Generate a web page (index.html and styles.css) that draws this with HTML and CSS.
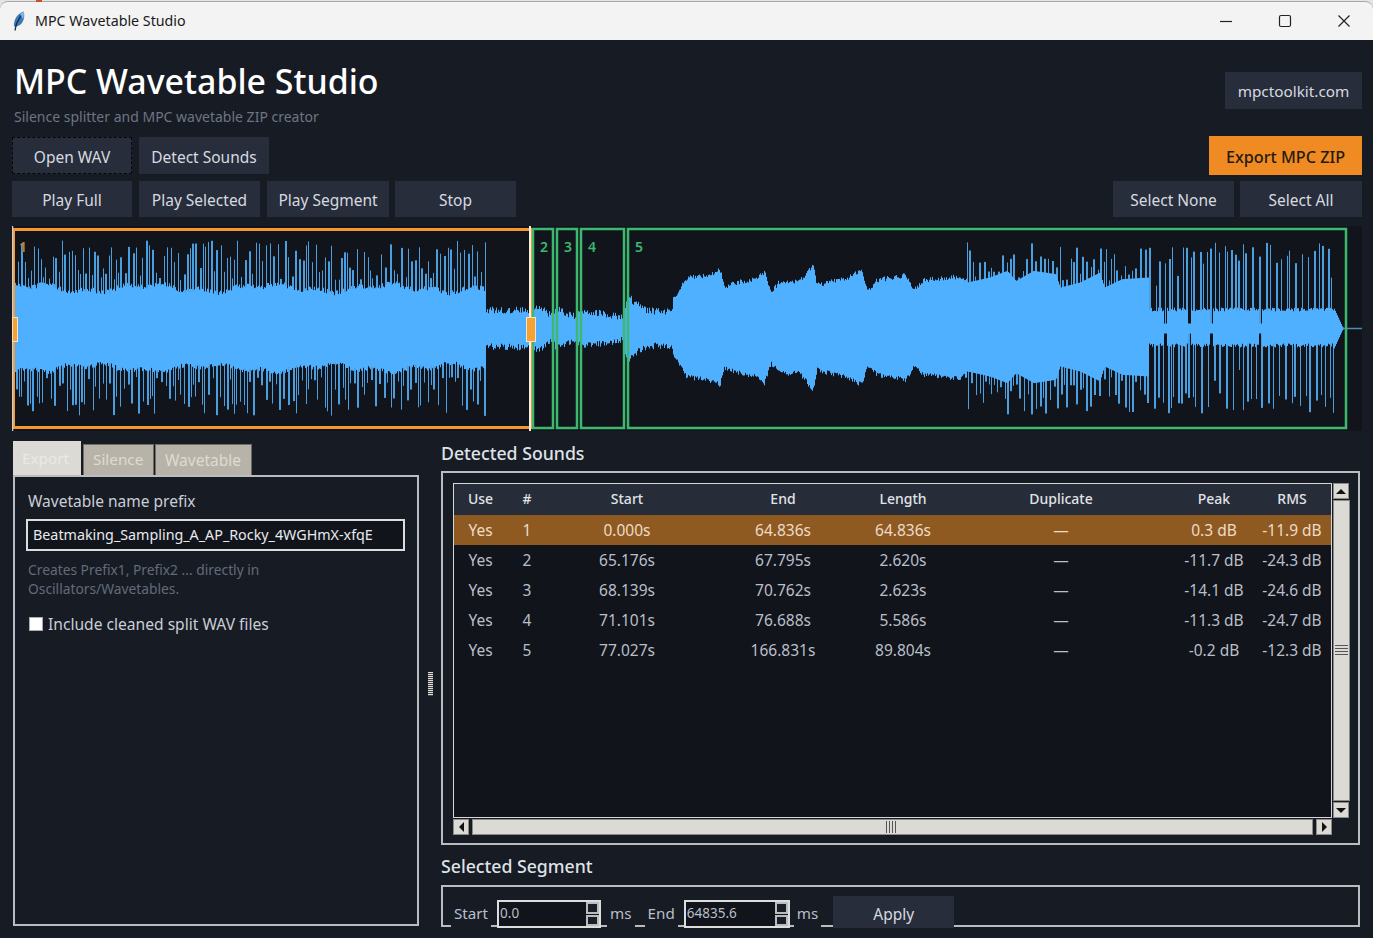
FILE: index.html
```html
<!DOCTYPE html>
<html lang="en">
<head>
<meta charset="utf-8">
<title>MPC Wavetable Studio</title>
<link rel="stylesheet" href="styles.css">
</head>
<body>
<div class="window">
  <header class="titlebar">
    <svg class="feather" viewBox="0 0 14 20" width="14" height="20"><path d="M2 15.500C1.500 10 4 3.500 11.500.5c1.800 4.500.3 10.500-3.500 13.500L4.500 15.500z" fill="#3a78bb"/><path d="M8 3C9.500 2 10.500 1.300 11.500.5c.8 2.500.5 5-.5 7.500z" fill="#86b7e6"/><path d="M3 19.500 4.500 12.500 9 4.500" fill="none" stroke="#14283f" stroke-width="1.200"/></svg>
    <span class="titlebar-text">MPC Wavetable Studio</span>
    <div class="controls">
      <svg width="14" height="14" viewBox="0 0 14 14"><path d="M1 7.500h12" stroke="#222" stroke-width="1.200"/></svg>
      <svg width="14" height="14" viewBox="0 0 14 14"><rect x="1.500" y="1.500" width="11" height="11" rx="1.500" fill="none" stroke="#222" stroke-width="1.200"/></svg>
      <svg width="14" height="14" viewBox="0 0 14 14"><path d="M1.500 1.500l11 11M12.500 1.500l-11 11" stroke="#222" stroke-width="1.200"/></svg>
    </div>
  </header>

  <main class="app">
    <div class="head">
      <div>
        <h1 class="title">MPC Wavetable Studio</h1>
        <p class="subtitle">Silence splitter and MPC wavetable ZIP creator</p>
      </div>
      <button class="btn link-btn">mpctoolkit.com</button>
    </div>

    <div class="toolbar toolbar-one">
      <div class="btn-group">
        <button class="btn w120 focused">Open WAV</button>
        <button class="btn w130">Detect Sounds</button>
      </div>
      <button class="btn export">Export MPC ZIP</button>
    </div>

    <div class="toolbar toolbar-two">
      <div class="btn-group play-group">
        <button class="btn w120">Play Full</button>
        <button class="btn w121">Play Selected</button>
        <button class="btn w122">Play Segment</button>
        <button class="btn w121 stop">Stop</button>
      </div>
      <div class="btn-group">
        <button class="btn w121">Select None</button>
        <button class="btn w122">Select All</button>
      </div>
    </div>

    <div class="wave-box">
      <svg class="wave" viewBox="0 0 1350 205" width="1350" height="205">
        <path id="wave-thin" class="wave-thin" d=""/>
        <path id="wave-core" class="wave-core" d=""/>
        <path class="tail" d="M1331 102.500h19"/>
        <g class="seg">
          <rect x="521" y="3" width="20" height="199"/>
          <rect x="545" y="3" width="20" height="199"/>
          <rect x="569" y="3" width="43" height="199"/>
          <rect x="616" y="3" width="718" height="199"/>
        </g>
        <rect class="sel" x="1.500" y="3.500" width="517" height="198"/>
        <path class="cursor" d="M0.500 0v205"/>
        <path class="cursor cursor-r" d="M518 0v205"/>
        <rect class="handle" x="0.500" y="91.500" width="5" height="24"/>
        <rect class="handle" x="514.500" y="91.500" width="9" height="24"/>
        <text class="lbl lbl-o" x="7" y="26">1</text>
        <text class="lbl" x="528" y="26">2</text>
        <text class="lbl" x="552" y="26">3</text>
        <text class="lbl" x="576" y="26">4</text>
        <text class="lbl" x="623" y="26">5</text>
      </svg>
    </div>

    <div class="split">
      <section class="left">
        <div class="tabs">
          <div class="tab active">Export</div>
          <div class="tab">Silence</div>
          <div class="tab">Wavetable</div>
        </div>
        <div class="tab-panel">
          <div class="field-label">Wavetable name prefix</div>
          <div class="text-input">Beatmaking_Sampling_A_AP_Rocky_4WGHmX-xfqE</div>
          <p class="hint">Creates Prefix1, Prefix2 ... directly in<br>Oscillators/Wavetables.</p>
          <label class="check"><span class="box"></span>Include cleaned split WAV files</label>
        </div>
      </section>

      <div class="sash"><span class="grip"></span></div>

      <section class="right">
        <h2 class="heading">Detected Sounds</h2>
        <div class="frame list-frame">
          <div class="tree-grid">
            <div class="tree">
              <table class="sounds">
                <colgroup>
                  <col class="c-use"><col class="c-num"><col class="c-start"><col class="c-end"><col class="c-len"><col class="c-dup"><col class="c-peak"><col class="c-rms">
                </colgroup>
                <thead>
                  <tr><th>Use</th><th>#</th><th>Start</th><th>End</th><th>Length</th><th>Duplicate</th><th>Peak</th><th>RMS</th></tr>
                </thead>
                <tbody>
                  <tr class="picked"><td>Yes</td><td>1</td><td>0.000s</td><td>64.836s</td><td>64.836s</td><td>—</td><td>0.3 dB</td><td>-11.9 dB</td></tr>
                  <tr><td>Yes</td><td>2</td><td>65.176s</td><td>67.795s</td><td>2.620s</td><td>—</td><td>-11.7 dB</td><td>-24.3 dB</td></tr>
                  <tr><td>Yes</td><td>3</td><td>68.139s</td><td>70.762s</td><td>2.623s</td><td>—</td><td>-14.1 dB</td><td>-24.6 dB</td></tr>
                  <tr><td>Yes</td><td>4</td><td>71.101s</td><td>76.688s</td><td>5.586s</td><td>—</td><td>-11.3 dB</td><td>-24.7 dB</td></tr>
                  <tr><td>Yes</td><td>5</td><td>77.027s</td><td>166.831s</td><td>89.804s</td><td>—</td><td>-0.2 dB</td><td>-12.3 dB</td></tr>
                </tbody>
              </table>
            </div>
            <div class="vscroll">
              <div class="sb-btn"><span class="arr up"></span></div>
              <div class="sb-thumb"><span class="grip-h"></span></div>
              <div class="sb-btn"><span class="arr down"></span></div>
            </div>
            <div class="hscroll">
              <div class="sb-btn"><span class="arr left-arr"></span></div>
              <div class="sb-thumb-h"><span class="grip-v"></span></div>
              <div class="sb-btn"><span class="arr right-arr"></span></div>
            </div>
          </div>
        </div>

        <h2 class="heading heading-seg">Selected Segment</h2>
        <div class="frame seg-frame">
          <div class="seg-row">
            <span class="seg-text s-start">Start</span>
            <div class="spin s-w104"><span class="spin-val">0.0</span><span class="spin-btns"><i></i><i></i></span></div>
            <span class="seg-text s-ms">ms</span>
            <span class="seg-text s-end">End</span>
            <div class="spin s-w106"><span class="spin-val">64835.6</span><span class="spin-btns"><i></i><i></i></span></div>
            <span class="seg-text s-ms2">ms</span>
            <button class="btn apply">Apply</button>
          </div>
        </div>
      </section>
    </div>
  </main>
</div>
<script src="script.js"></script>
</body>
</html>
```

FILE: styles.css
```css
* { box-sizing: border-box; }
html, body { margin: 0; padding: 0; }
body {
  width: 1373px;
  height: 938px;
  overflow: hidden;
  background: #e4e4e4;
  font-family: "Noto Sans", "Open Sans", sans-serif;
  color: #d6dae0;
}
.window { height: 938px; display: flex; flex-direction: column; position: relative; }
.window::before {
  content: "";
  position: absolute;
  left: 36px;
  top: 0;
  width: 6px;
  height: 2px;
  background: #c8502a;
}
.titlebar {
  height: 39px;
  margin-top: 1px;
  flex: none;
  display: flex;
  align-items: center;
  background: #f3f3f3;
  border-top: 1px solid #a9a9a9;
  border-radius: 8px 8px 0 0;
  padding-left: 12px;
  color: #1a1a1a;
}
.feather { flex: none; }
.titlebar-text { margin: -2px 0 0 9px; font-size: 14.250px; flex: 1; }
.controls { display: flex; gap: 45px; margin-right: 22px; }
.app {
  flex: 1;
  background: #171b24;
  padding: 0 11px 0 12px;
  display: flex;
  flex-direction: column;
  min-height: 0;
}
.head { height: 97px; display: flex; justify-content: space-between; flex: none; }
.title {
  margin: 20px 0 0 2px;
  font-size: 33.900px;
  line-height: 42px;
  font-weight: 500;
  color: #fff;
  letter-spacing: 0;
}
.subtitle {
  margin: 5px 0 0 2px;
  font-size: 14px;
  line-height: 20px;
  color: #6d7583;
}
.btn {
  display: block;
  height: 36px;
  padding: 1px 0 0;
  border: 0;
  background: #272d3a;
  color: #d6dae0;
  font: inherit;
  font-size: 15.500px;
  text-align: center;
}
.link-btn { width: 137px; height: 37px; margin-top: 32px; font-size: 15.300px; }
.toolbar { display: flex; justify-content: space-between; align-items: center; flex: none; }
.toolbar-one { height: 37px; }
.toolbar-one .btn { padding-top: 2px; }
.toolbar-two { height: 36px; margin-top: 7px; }
.btn-group { display: flex; gap: 6px; }
.toolbar-one .btn-group, .play-group { gap: 7px; }
.stop { margin-left: -1px; }
.w120 { width: 120px; }
.w121 { width: 121px; }
.w122 { width: 122px; }
.w130 { width: 130px; height: 37px; }
.focused { outline: 1px dashed #05070a; outline-offset: -1px; height: 37px; }
.export {
  width: 153px;
  height: 39px;
  background: #f08a22;
  color: #241a10;
  font-size: 16.200px;
  font-weight: 500;
}
.wave-box { flex: none; height: 205px; margin-top: 9px; background: #11141b; }
.wave { display: block; }
.wave-thin { stroke: #4a9fe0; stroke-width: 1; fill: none; }
.wave-core { stroke: #4fb0ff; stroke-width: 1; fill: none; }
.tail { stroke: #4a8cbd; stroke-width: 1.500; fill: none; }
.seg rect { fill: none; stroke: #3cb86f; stroke-width: 2.500; }
.sel { fill: none; stroke: #f4982f; stroke-width: 3; }
.cursor { stroke: #cfcfcf; stroke-width: 1.500; }
.cursor-r { stroke: #eef2ea; stroke-width: 2; }
.handle { fill: #f4a235; stroke: #f6e3c7; stroke-width: 1; }
.lbl { fill: #3cb86f; font-size: 14px; font-weight: 600; }
.lbl-o { fill: #c07f30; }

.split { flex: 1; display: flex; margin-top: 10px; min-height: 0; }
.left { width: 406px; margin-left: 1px; flex: none; display: flex; flex-direction: column; }
.tabs { display: flex; align-items: flex-end; height: 34px; gap: 2px; flex: none; }
.tab {
  height: 31px;
  padding: 4px 9px 0;
  background: #b7b3a8;
  color: #dedbd3;
  font-size: 15.300px;
  border: 1px solid #6d6d68;
  border-bottom: 0;
}
.tab:nth-child(2) { width: 71px; }
.tab:nth-child(3) { width: 97px; margin-left: -1px; font-size: 15.500px; }
.tab.active {
  height: 34px;
  width: 68px;
  padding-top: 7px;
  background: #dcdad5;
  color: #ebe9e4;
  border: 0;
}
.tab-panel {
  height: 451px;
  border: 2px solid #b9bdc0;
  padding: 13px 12px 0 13px;
}
.field-label { font-size: 15.500px; line-height: 22px; color: #c9ced6; }
.text-input {
  width: 379px;
  height: 32px;
  margin: 7px 0 0 -2px;
  padding: 0 5px;
  border: 2px solid #dcdedd;
  background: #11141b;
  color: #e8eaee;
  font-size: 14.300px;
  line-height: 28px;
  white-space: nowrap;
}
.hint { margin: 9px 0 0; font-size: 13.800px; line-height: 19px; color: #626b79; }
.check { display: flex; align-items: center; margin-top: 16px; font-size: 15.600px; line-height: 20px; color: #c9ced6; }
.box { width: 14px; height: 14px; margin: 0 5px 0 1px; background: #fff; border: 1px solid #aaa; flex: none; }

.sash { width: 22px; flex: none; position: relative; }
.grip {
  position: absolute;
  left: 9px;
  top: 231px;
  width: 5px;
  height: 24px;
  background: repeating-linear-gradient(#dfe0de 0 1px, #444 1px 2px);
}
.right { flex: 1; display: flex; flex-direction: column; min-width: 0; }
.heading { margin: 0; font-size: 17.700px; line-height: 24px; font-weight: 500; color: #dfe2e6; height: 30px; flex: none; }
.frame { border: 2px solid #b9bdc0; }
.list-frame { width: 919px; height: 374px; padding: 10px 8px 0 10px; flex: none; }
.tree-grid { display: grid; grid-template-columns: 879px 18px; grid-template-rows: 335px 17px; }
.tree { border: 1px solid #d4d6d7; background: #11141b; overflow: hidden; }
.sounds { width: 877px; table-layout: fixed; border-collapse: collapse; font-size: 15.500px; }
.c-use { width: 53px; }
.c-num { width: 40px; }
.c-start { width: 160px; }
.c-end { width: 152px; }
.c-len { width: 88px; }
.c-dup { width: 228px; }
.c-peak { width: 78px; }
.c-rms { width: 78px; }
.sounds th {
  height: 31px;
  padding: 0 0 3px;
  background: #262c38;
  color: #e0e3e7;
  font-weight: 500;
  font-size: 14px;
}
.sounds td { height: 30px; padding: 0 0 1px; text-align: center; color: #b9bfc8; }
.picked td { background: #8f5a22; color: #ecdcc6; }
.vscroll { display: flex; flex-direction: column; gap: 1px; padding-left: 1px; }
.hscroll { display: flex; gap: 3px; margin-top: 1px; }
.sb-btn {
  width: 16px;
  height: 16px;
  flex: none;
  background: #dcdad5;
  border: 1px solid #8a8a86;
  display: flex;
  align-items: center;
  justify-content: center;
}
.sb-thumb {
  flex: 1;
  background: #dcdad5;
  border: 1px solid #8a8a86;
  display: flex;
  align-items: center;
  justify-content: center;
}
.sb-thumb-h {
  flex: 1;
  background: #dcdad5;
  border: 1px solid #8a8a86;
  display: flex;
  align-items: center;
  padding-left: 413px;
}
.grip-h { width: 13px; height: 12px; background: repeating-linear-gradient(#555 0 1px, #dcdad5 1px 3px); }
.grip-v { width: 12px; height: 12px; background: repeating-linear-gradient(90deg, #555 0 1px, #dcdad5 1px 3px); }
.arr { width: 0; height: 0; display: block; border-style: solid; border-color: transparent; }
.up { border-width: 0 5px 5px; border-bottom-color: #111; }
.down { border-width: 5px 5px 0; border-top-color: #111; }
.left-arr { border-width: 5px 5px 5px 0; border-right-color: #111; }
.right-arr { border-width: 5px 0 5px 5px; border-left-color: #111; }
.heading-seg { margin-top: 8px; height: 32px; line-height: 26px; }
.seg-frame { width: 919px; height: 42px; padding-left: 8px; position: relative; }
.seg-row { display: flex; align-items: flex-end; height: 40px; margin-bottom: -2px; position: relative; top: 1px; }
.seg-text { height: 26px; line-height: 23px; font-size: 15.200px; color: #b9bfc8; background: #171b24; padding: 0 3px; flex: none; }
.s-ms { margin-left: 6px; }
.s-end { margin-left: 10px; }
.s-ms2 { margin-left: 4px; }
.spin {
  height: 28px;
  margin-left: 6px;
  border: 2px solid #dcdedd;
  background: #11141b;
  display: flex;
  justify-content: space-between;
  flex: none;
}
.s-w104 { width: 104px; }
.s-w106 { width: 106px; }
.spin-val { font-size: 13.500px; line-height: 22px; padding-left: 1px; color: #b9bfc8; }
.spin-btns { display: flex; flex-direction: column; width: 13px; gap: 1px; }
.spin-btns i { flex: 1; border: 2px solid #b9bdc0; background: #1a1e27; }
.apply { width: 121px; height: 32px; margin-left: 12px; padding-top: 4px; flex: none; }
```

FILE: script.js
```javascript
(function () {
  var seed = 20240611;
  function rnd() {
    seed |= 0; seed = (seed + 0x6d2b79f5) | 0;
    var t = Math.imul(seed ^ (seed >>> 15), 1 | seed);
    t = (t + Math.imul(t ^ (t >>> 7), 61 | t)) ^ t;
    return ((t ^ (t >>> 14)) >>> 0) / 4294967296;
  }
  function interp(pts, x) {
    for (var i = 1; i < pts.length; i++) {
      if (x <= pts[i][0]) {
        var a = pts[i - 1], b = pts[i];
        return a[1] + (b[1] - a[1]) * (x - a[0]) / (b[0] - a[0]);
      }
    }
    return pts[pts.length - 1][1];
  }
  function fromZoom(list) {
    return list.map(function (p) { return [680 + p[0] / 2.263, 103 - p[1] / 3]; });
  }
  var coreD = fromZoom([[0,190],[15,158],[60,152],[90,135],[100,185],[130,172],[175,160],[190,140],[205,200],[225,170],[270,170],[300,120],[310,180],[385,155],[410,135],[425,195],[445,165],[495,155],[510,150],[530,195],[550,165],[630,155],[650,165],[700,150],[740,130],[760,160],[800,130],[850,140],[860,180],[905,165],[950,135],[960,180],[1000,155],[1060,150]]);
  var coreB = [[485,15],[530,15],[540,18],[552,8],[556,16],[576,8],[580,15],[622,8],[628,30],[634,22],[648,14],[672,14]];
  var dips = [1165, 1189, 1211, 1260];

  function makeSide() {
    return { left: 0, high: false, h: 0 };
  }
  function step(side, gapMax, lowSpike, highSpike, tallChance, spikeLen) {
    if (side.left <= 0) {
      side.high = !side.high;
      if (side.high) {
        side.left = 1 + Math.floor(rnd() * spikeLen);
        side.h = rnd() < tallChance ? highSpike - rnd() * 22 : lowSpike + rnd() * 14;
      } else {
        side.left = 1 + Math.floor(rnd() * gapMax);
        side.h = 0;
      }
    }
    side.left--;
    return side.h;
  }
  var top = makeSide(), bot = makeSide();
  var core = '', thin = '', cx = 102.5;

  for (var px = 14; px <= 1343; px++) {
    var up, dn, su = 0, sd = 0;
    if (px <= 485) {
      var wob = 3 * Math.sin(px / 19) + 2 * Math.sin(px / 6.1);
      up = 38 + wob + rnd() * 5;
      dn = 37 + wob + rnd() * 5;
      su = step(top, 3, 48, 88, 0.6, 1.6);
      sd = step(bot, 3, 48, 88, 0.6, 1.6);
    } else if (px < 673) {
      var e = interp(coreB, px);
      up = e + rnd() * 7;
      dn = e + rnd() * 7;
    } else if (px < 967) {
      var f = interp(coreD, px);
      up = f - 2 + rnd() * 5;
      dn = f - 4 + rnd() * 5;
    } else if (px < 1149) {
      var g = interp(coreD, px);
      up = g - 2; dn = g - 5;
      su = step(top, 3, g, 86, 0.6, 2);
      sd = step(bot, 3, g, 86, 0.6, 2);
    } else if (px < 1334) {
      up = 17 + rnd() * 4;
      dn = 15 + rnd() * 4;
      for (var k = 0; k < dips.length; k++) {
        if (Math.abs(px - dips[k]) < 2) { up = 5; dn = 5; }
      }
      su = step(top, 5, 40, 86, 0.88, 2);
      sd = step(bot, 5, 40, 86, 0.88, 2);
    } else {
      up = dn = Math.max(1, (1343 - px) * 2.2);
    }
    var x = px - 12 + 0.5;
    core += 'M' + x + ' ' + (cx - up).toFixed(1) + 'V' + (cx + dn).toFixed(1);
    if (su > up) thin += 'M' + x + ' ' + (cx - su).toFixed(1) + 'V' + (cx - up + 1).toFixed(1);
    if (sd > dn) thin += 'M' + x + ' ' + (cx + dn - 1).toFixed(1) + 'V' + (cx + sd).toFixed(1);
  }
  document.getElementById('wave-core').setAttribute('d', core);
  document.getElementById('wave-thin').setAttribute('d', thin);
})();
```
